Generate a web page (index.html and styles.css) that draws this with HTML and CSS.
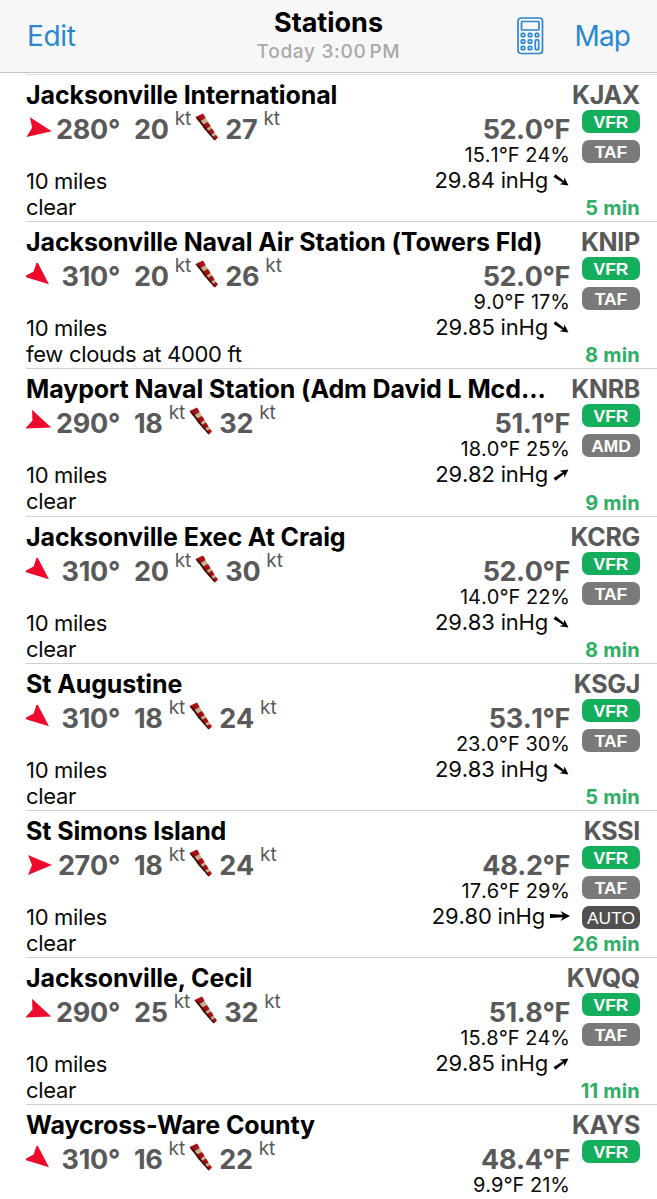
FILE: index.html
```html
<!DOCTYPE html>
<html lang="en">
<head>
    <meta charset="UTF-8">
    <meta name="viewport" content="width=device-width, initial-scale=1.0">
    <title>Stations</title>
    <link rel="stylesheet" href="styles.css">
</head>
<body>
    <div class="navbar">
        <a class="nav-link">Edit</a>
        <div class="nav-title">
            <h1>Stations</h1>
            <p>Today 3:00<span class="thin"></span>PM</p>
        </div>
        <div class="nav-right">
            <svg class="calc" width="27" height="38" viewBox="0 0 27 38" fill="none" stroke="#2a87d0" stroke-width="1.7">
                <rect x="1" y="1" width="24.5" height="35.5" rx="3"/>
                <rect x="4.5" y="4.5" width="17.5" height="8.5" rx="1"/>
                <rect x="4.3" y="16.3" width="3.4" height="3.4" rx="1"/>
                <rect x="11.3" y="16.3" width="3.4" height="3.4" rx="1"/>
                <rect x="18.3" y="16.3" width="3.4" height="3.4" rx="1"/>
                <rect x="4.3" y="22.8" width="3.4" height="3.4" rx="1"/>
                <rect x="11.3" y="22.8" width="3.4" height="3.4" rx="1"/>
                <rect x="4.3" y="29.3" width="3.4" height="3.4" rx="1"/>
                <rect x="11.3" y="29.3" width="3.4" height="3.4" rx="1"/>
                <rect x="18.3" y="22.8" width="3.4" height="9.9" rx="1"/>
            </svg>
            <a class="nav-link map-link">Map</a>
        </div>
    </div>

    <div class="stations" id="stations"></div>

    <script src="stations.js"></script>
</body>
</html>
```
FILE: styles.css
```css
body {
    font-family: 'Inter', 'Liberation Sans', sans-serif;
    background-color: #fff;
    color: #0a0a0a;
    margin: 0;
    height: 1199px;
    overflow: hidden;
}

.navbar {
    display: grid;
    grid-template-columns: 1fr auto 1fr;
    height: 73px;
    box-sizing: border-box;
    padding: 0 27px;
    background-color: #f7f7f7;
    border-bottom: 1px solid #c4c4c4;
    align-items: center;
}

.nav-link {
    color: #2a87d0;
    font-size: 28px;
    line-height: 34px;
    letter-spacing: -0.3px;
}

.map-link {
    letter-spacing: -0.9px;
}

.nav-title {
    text-align: center;
}

.nav-title h1 {
    margin: 0;
    font-size: 27px;
    font-weight: 650;
    line-height: 32px;
    color: #000;
}

.nav-title p {
    margin: 0;
    font-size: 19px;
    font-weight: 500;
    line-height: 26px;
    letter-spacing: 0.7px;
    color: #a9a9a9;
}

.thin {
    display: inline-block;
    width: 3px;
}

.nav-right {
    display: flex;
    justify-content: flex-end;
    align-items: center;
    gap: 31px;
}

.calc {
    display: block;
}

.stations {
    margin-left: 26px;
    border-top: 1px solid #dcdcdc;
    margin-top: 1px;
}

.station {
    height: 147.2px;
    box-sizing: border-box;
    border-bottom: 1px solid #d0d0d0;
    padding-right: 17px;
    display: flex;
    flex-direction: column;
}

.station:last-child {
    height: auto;
    border-bottom: none;
}

.station-head {
    display: flex;
    justify-content: space-between;
    box-sizing: border-box;
    height: 35px;
    padding-top: 6px;
    line-height: 29px;
    font-size: 25px;
    font-weight: 650;
    letter-spacing: -0.1px;
}

.name {
    color: #000;
    white-space: nowrap;
}

.code {
    color: #595959;
    letter-spacing: -0.3px;
}

.station-body {
    flex: 1;
    display: flex;
}

.left {
    flex: 1;
    font-size: 22px;
    line-height: 26px;
    letter-spacing: -0.3px;
}

.wind {
    display: flex;
    height: 58px;
    line-height: 40px;
    font-size: 27px;
    font-weight: 650;
    font-kerning: none;
    letter-spacing: -0.3px;
    color: #595959;
}

.arrow {
    width: 26px;
    height: 26px;
    margin-top: 6px;
}

.dir {
    width: 68px;
    text-align: right;
    margin-right: 14px;
}

.unit {
    font-size: 19px;
    font-weight: 400;
    line-height: 18px;
    letter-spacing: 0;
    margin-left: 6px;
}

.sock {
    width: 24px;
    height: 28px;
    margin: 3px 6px 0 4px;
}

.middle {
    text-align: right;
    margin-right: 12px;
    font-kerning: none;
}

.temp {
    font-size: 27px;
    font-weight: 650;
    line-height: 40px;
    height: 32px;
    letter-spacing: -0.4px;
    color: #595959;
}

.dew {
    font-size: 20px;
    line-height: 26px;
}

.pressure {
    display: flex;
    justify-content: flex-end;
    align-items: center;
    font-size: 22px;
    line-height: 25px;
    letter-spacing: -0.2px;
}

.trend {
    width: 17px;
    height: 17px;
    margin-left: 5px;
}

.trend.flat {
    width: 20px;
    height: 20px;
}

.right {
    display: flex;
    flex-direction: column;
    align-items: flex-end;
    width: 58px;
}

.badge {
    width: 58px;
    height: 23px;
    margin-bottom: 7px;
    border-radius: 7px;
    font-family: 'Liberation Sans', sans-serif;
    font-size: 17.4px;
    font-weight: bold;
    line-height: 24px;
    text-align: center;
    color: #fff;
    background-color: #7a7a7a;
}

.badge.vfr {
    background-color: #14ae5c;
}

.badge.auto {
    background-color: #505050;
    font-weight: normal;
    margin-bottom: 0;
}

.age {
    margin-top: auto;
    font-size: 20px;
    font-weight: 650;
    line-height: 26px;
    letter-spacing: 0.2px;
    font-kerning: none;
    white-space: nowrap;
    color: #2fae65;
}
```
FILE: stations.js
```js
const stations = [
    { name: 'Jacksonville International', code: 'KJAX', dir: 280, speed: 20, gust: 27, temp: '52.0', dew: '15.1', hum: 24, press: '29.84', trend: 35, sky: 'clear', tags: ['VFR', 'TAF'], age: 5 },
    { name: 'Jacksonville Naval Air Station (Towers Fld)', code: 'KNIP', dir: 310, speed: 20, gust: 26, temp: '52.0', dew: '9.0', hum: 17, press: '29.85', trend: 35, sky: 'few clouds at 4000 ft', tags: ['VFR', 'TAF'], age: 8 },
    { name: 'Mayport Naval Station (Adm David L Mcd...', code: 'KNRB', dir: 290, speed: 18, gust: 32, temp: '51.1', dew: '18.0', hum: 25, press: '29.82', trend: -35, sky: 'clear', tags: ['VFR', 'AMD'], age: 9 },
    { name: 'Jacksonville Exec At Craig', code: 'KCRG', dir: 310, speed: 20, gust: 30, temp: '52.0', dew: '14.0', hum: 22, press: '29.83', trend: 35, sky: 'clear', tags: ['VFR', 'TAF'], age: 8 },
    { name: 'St Augustine', code: 'KSGJ', dir: 310, speed: 18, gust: 24, temp: '53.1', dew: '23.0', hum: 30, press: '29.83', trend: 35, sky: 'clear', tags: ['VFR', 'TAF'], age: 5 },
    { name: 'St Simons Island', code: 'KSSI', dir: 270, speed: 18, gust: 24, temp: '48.2', dew: '17.6', hum: 29, press: '29.80', trend: 0, sky: 'clear', tags: ['VFR', 'TAF', 'AUTO'], age: 26 },
    { name: 'Jacksonville, Cecil', code: 'KVQQ', dir: 290, speed: 25, gust: 32, temp: '51.8', dew: '15.8', hum: 24, press: '29.85', trend: -35, sky: 'clear', tags: ['VFR', 'TAF'], age: 11 },
    { name: 'Waycross-Ware County', code: 'KAYS', dir: 310, speed: 16, gust: 22, temp: '48.4', dew: '9.9', hum: 21, tags: ['VFR'] }
];

const sock = `
    <svg class="sock" viewBox="0 0 24 28">
        <path d="M1 4L8.500 1L13 9L22.500 24L19.500 26.500L10 17Z" fill="#c4b189"/>
        <path d="M0.500 4L8 0.500L10.500 5L4 9ZM7 12L13 9L15.500 13L10 17ZM12 18.500L17 15.500L19.500 19.500L15 22.500ZM17 24.500L21 22L23 24.500L20 27.500Z" fill="#a80f17"/>
        <path d="M0.500 4L10 16.500L19.500 27.500L20 26L11.500 15.500L4 5.500Z" fill="#32100c"/>
    </svg>`;

function conditions(s) {
    return `
        <div>10 miles</div>
        <div>${s.sky}</div>`;
}

function pressure(s) {
    return `
        <div class="pressure">${s.press} inHg
            <svg class="trend ${s.trend ? '' : 'flat'}" viewBox="-9 -9 18 18"><path transform="rotate(${s.trend})" d="M-9 -1.800L2.500 -1.100L0.500 -4.500L9 0L0.500 4.500L2.500 1.100L-9 1.800Z"/></svg>
        </div>`;
}

document.getElementById('stations').innerHTML = stations.map(s => `
    <div class="station">
        <div class="station-head"><span class="name">${s.name}</span><span class="code">${s.code}</span></div>
        <div class="station-body">
            <div class="left">
                <div class="wind">
                    <svg class="arrow" viewBox="-13 -13 26 26"><path transform="rotate(${s.dir - 270})" d="M13 0L-11 10L-7 0L-11 -10Z" fill="#ee0a2c"/></svg>
                    <span class="dir">${s.dir}°</span>
                    <span>${s.speed}</span><span class="unit">kt</span>
                    ${sock}
                    <span>${s.gust}</span><span class="unit">kt</span>
                </div>
                ${s.sky ? conditions(s) : ''}
            </div>
            <div class="middle">
                <div class="temp">${s.temp}°F</div>
                <div class="dew">${s.dew}°F ${s.hum}%</div>
                ${s.press ? pressure(s) : ''}
            </div>
            <div class="right">
                ${s.tags.map(t => `<div class="badge ${t.toLowerCase()}">${t}</div>`).join('')}
                ${s.age ? `<div class="age">${s.age} min</div>` : ''}
            </div>
        </div>
    </div>`).join('');
```
